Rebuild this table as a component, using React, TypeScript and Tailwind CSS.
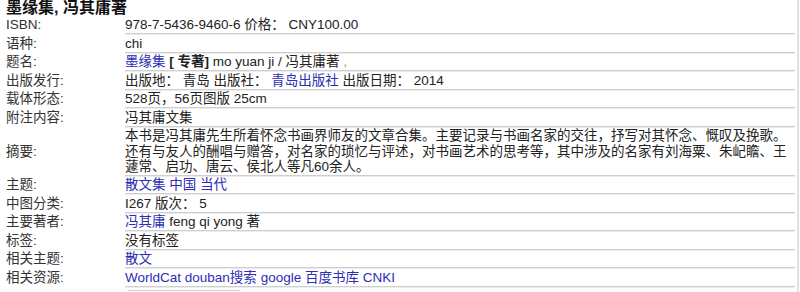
const link = "text-[#2d2db5]";

type Row = { label: string; value: React.ReactNode; tall?: boolean };

const rows: Row[] = [
  { label: "ISBN:", value: <>978-7-5436-9460-6 价格： CNY100.00</> },
  { label: "语种:", value: <>chi</> },
  {
    label: "题名:",
    value: (
      <>
        <a className={link}>墨缘集</a> <b>[ 专著]</b> mo yuan ji / 冯其庸著 <span className="text-[#999]">,</span>
      </>
    ),
  },
  {
    label: "出版发行:",
    value: (
      <>
        出版地： 青岛 出版社： <a className={link}>青岛出版社</a> 出版日期： 2014
      </>
    ),
  },
  { label: "载体形态:", value: <>528页，56页图版 25cm</> },
  { label: "附注内容:", value: <>冯其庸文集</> },
  {
    label: "摘要:",
    tall: true,
    value: (
      <>
        <div className="whitespace-nowrap">本书是冯其庸先生所着怀念书画界师友的文章合集。主要记录与书画名家的交往，抒写对其怀念、慨叹及挽歌。</div>
        <div className="whitespace-nowrap">还有与友人的酬唱与赠答，对名家的琐忆与评述，对书画艺术的思考等，其中涉及的名家有刘海粟、朱屺瞻、王</div>
        <div className="whitespace-nowrap">蘧常、启功、唐云、侯北人等凡60余人。</div>
      </>
    ),
  },
  {
    label: "主题:",
    value: (
      <>
        <a className={link}>散文集</a> <a className={link}>中国</a> <a className={link}>当代</a>
      </>
    ),
  },
  { label: "中图分类:", value: <>I267 版次： 5</> },
  {
    label: "主要著者:",
    value: (
      <>
        <a className={link}>冯其庸</a> feng qi yong 著
      </>
    ),
  },
  { label: "标签:", value: <>没有标签</> },
  { label: "相关主题:", value: <a className={link}>散文</a> },
  {
    label: "相关资源:",
    value: (
      <>
        <a className={link}>WorldCat</a> <a className={link}>douban搜索</a> <a className={link}>google</a>{" "}
        <a className={link}>百度书库</a> <a className={link}>CNKI</a>
      </>
    ),
  },
];

export default function App() {
  return (
    <div
      className="w-[799px] h-[292px] overflow-hidden bg-white border-r-2 border-[#e2e2e2] text-[13.5px] text-[#222]"
      style={{ fontFamily: '"Liberation Sans", "Noto Sans CJK SC", sans-serif' }}
    >
      <h1 className="pl-[6px] h-[16.5px] text-[16px] leading-[16px] font-bold text-[#111]">墨缘集, 冯其庸著</h1>
      {rows.map((r) => (
        <div key={r.label} className="flex">
          <div className={`w-[125px] shrink-0 pl-[6px] text-[#333] flex ${r.tall ? "items-center" : ""}`}>
            <span className="leading-[16px] pt-[0.5px]">{r.label}</span>
          </div>
          <div
            className={`w-[670px] pt-[0.5px] border-b border-[#cfcfcf] shadow-[0_1px_0_#ececec] mb-[1px] ${
              r.tall ? "leading-[15.6px]" : "leading-[16px]"
            }`}
          >
            {r.value}
          </div>
        </div>
      ))}
      <div className="ml-[128px] mt-[2px] w-[112px] h-[4px] border-t border-[#cccccc]" />
    </div>
  );
}
